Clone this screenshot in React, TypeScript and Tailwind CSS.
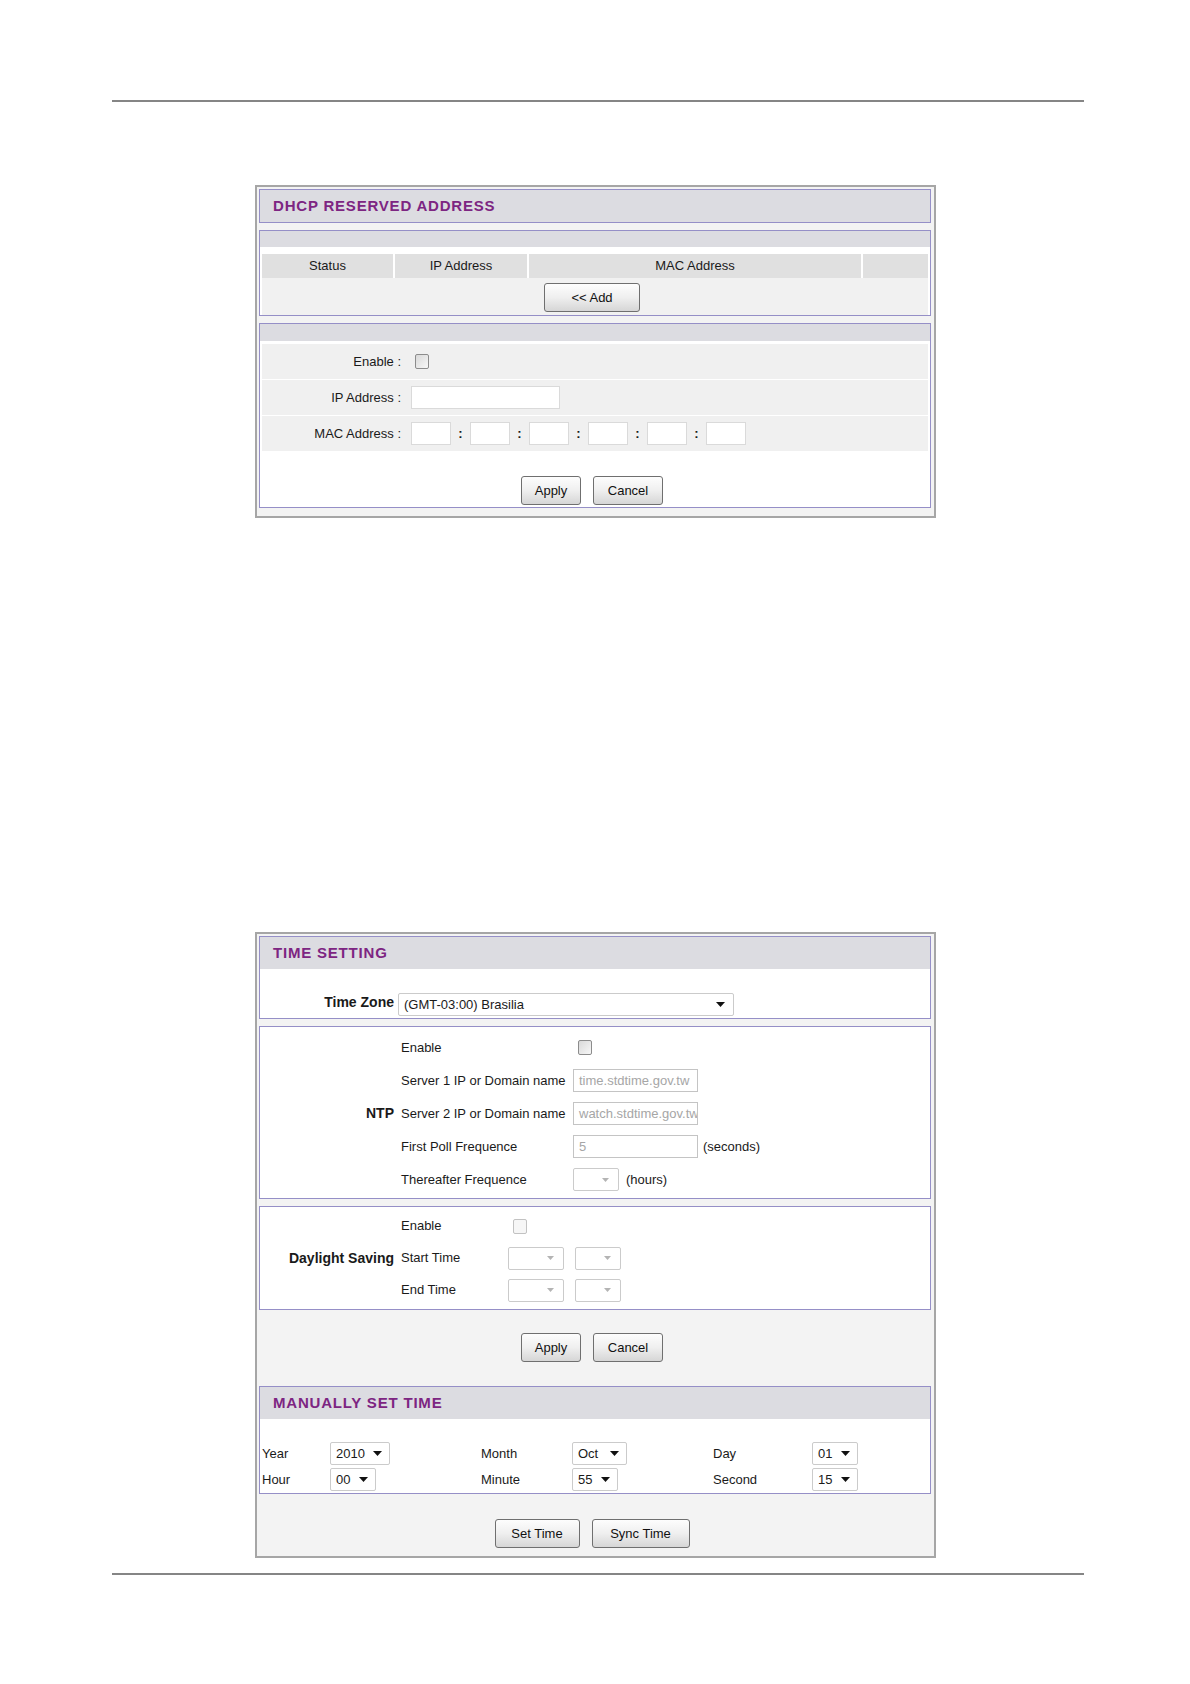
import React from 'react';

const Btn = ({ label, w }: { label: string; w: string }) => (
  <div
    className={`${w} h-[29px] flex items-center justify-center border border-[#6f6f6f] rounded-[3px] bg-linear-to-b from-[#fdfdfd] via-[#efefef] to-[#d6d6d6] text-[13px] text-[#111]`}
  >
    {label}
  </div>
);

const Arrow = ({ dim }: { dim?: boolean }) =>
  dim ? (
    <svg width="7" height="4" viewBox="0 0 7 4">
      <polygon points="0,0 7,0 3.5,4" fill="#b4b4b4" />
    </svg>
  ) : (
    <svg width="9" height="5" viewBox="0 0 9 5">
      <polygon points="0,0 9,0 4.5,5" fill="#111" />
    </svg>
  );

const Select = ({ value, w, dim, arrowPad = 'pr-[7px]' }: { value?: string; w: string; dim?: boolean; arrowPad?: string }) => (
  <div
    className={`${w} h-[23px] flex items-center justify-between pl-[5px] ${arrowPad} bg-white border border-[#cbcbcb] rounded-[2px] text-[13px]`}
  >
    <span>{value ?? ''}</span>
    <Arrow dim={dim} />
  </div>
);

const Check = ({ dim }: { dim?: boolean }) => (
  <div
    className={`w-[14px] h-[15px] border rounded-[2px] ${
      dim ? 'border-[#c2c2c2] bg-[#f6f6f6]' : 'border-[#8c8c8c] bg-linear-to-br from-[#d9d9d9] to-[#f7f7f7]'
    }`}
  />
);

const Field = ({ w, value }: { w: string; value?: string }) => (
  <div
    className={`${w} h-[23px] flex items-center pl-[5px] overflow-hidden whitespace-nowrap bg-white border ${
      value ? 'border-[#c4c4c4] text-[#a6a6a6]' : 'border-[#dadada]'
    } text-[13px]`}
  >
    {value}
  </div>
);

const Header = ({ title }: { title: string }) => (
  <div className="h-[32px] bg-[#dcdce1] flex items-center pl-[13px] text-[15px] font-bold tracking-[0.8px] text-[#7d2582]">
    {title}
  </div>
);

const Panel = ({ children, pb }: { children: React.ReactNode; pb: string }) => (
  <div className={`ml-[255px] w-[681px] border-2 border-[#a6a6a6] bg-[#f3f3f3] pt-[2px] pl-[2px] pr-[3px] ${pb} flex flex-col gap-[7px]`}>
    {children}
  </div>
);

const box = 'border border-[#958fc7] bg-white';

export default function App() {
  return (
    <div className="w-[1190px] h-[1684px] bg-white text-[#1a1a1a] font-['Liberation_Sans',Arial,sans-serif] text-[13px]">
      {/* top rule */}
      <div className="pt-[100px] pl-[112px]">
        <div className="w-[972px] h-[2px] bg-[#858585]" />
      </div>

      {/* DHCP reserved address */}
      <div className="mt-[83px]">
        <Panel pb="pb-[8px]">
          <div className={`${box} !bg-[#dcdce1]`}>
            <Header title="DHCP RESERVED ADDRESS" />
          </div>

          <div className={box}>
            <div className="h-[16px] bg-[#dcdce1]" />
            <div className="h-[7px]" />
            <div className="px-[2px] grid grid-cols-[131px_132px_332px_1fr] gap-x-[2px] bg-white">
              {['Status', 'IP Address', 'MAC Address', ''].map((h, i) => (
                <div key={i} className="h-[24px] bg-[#e0e0e0] flex items-center justify-center">
                  {h}
                </div>
              ))}
            </div>
            <div className="mx-[2px] h-[37px] bg-[#f1f1f1] flex justify-center pt-[5px] pr-[6px]">
              <Btn label="<< Add" w="w-[96px]" />
            </div>
          </div>

          <div className={box}>
            <div className="h-[17px] bg-[#dcdce1]" />
            <div className="px-[2px] pt-[3px] flex flex-col gap-[1px]">
              <div className="h-[35px] bg-[#f0f0f0] flex items-center">
                <div className="w-[145px] text-right pr-[6px]">Enable :</div>
                <div className="pl-[8px]">
                  <Check />
                </div>
              </div>
              <div className="h-[35px] bg-[#f0f0f0] flex items-center">
                <div className="w-[145px] text-right pr-[6px]">IP Address :</div>
                <div className="pl-[4px]">
                  <Field w="w-[149px]" />
                </div>
              </div>
              <div className="h-[35px] bg-[#f0f0f0] flex items-center">
                <div className="w-[145px] text-right pr-[6px]">MAC Address :</div>
                <div className="pl-[4px] flex items-center">
                  {[0, 1, 2, 3, 4, 5].map((i) => (
                    <React.Fragment key={i}>
                      {i > 0 && <span className="w-[19px] text-center font-bold">:</span>}
                      <Field w="w-[40px]" />
                    </React.Fragment>
                  ))}
                </div>
              </div>
            </div>
            <div className="pt-[25px] pb-[2px] pr-[6px] flex justify-center gap-[12px]">
              <Btn label="Apply" w="w-[60px]" />
              <Btn label="Cancel" w="w-[70px]" />
            </div>
          </div>
        </Panel>
      </div>

      {/* Time setting */}
      <div className="mt-[414px]">
        <Panel pb="pb-[8px]">
          <div className={box}>
            <Header title="TIME SETTING" />
            <div className="h-[49px] flex items-end pb-[2px]">
              <div className="w-[134px] text-right text-[14px] font-bold pb-[3px]">Time Zone</div>
              <div className="pl-[4px]">
                <Select value="(GMT-03:00) Brasilia" w="w-[336px]" arrowPad="pr-[8px]" />
              </div>
            </div>
          </div>

          <div className={`${box} flex pt-[4px] pb-[2px]`}>
            <div className="w-[134px] flex items-center justify-end text-[14px] font-bold">NTP</div>
            <div className="pl-[7px] flex flex-col">
              <div className="h-[33px] flex items-center">
                <div className="w-[172px]">Enable</div>
                <div className="pl-[5px]">
                  <Check />
                </div>
              </div>
              <div className="h-[33px] flex items-center">
                <div className="w-[172px]">Server 1 IP or Domain name</div>
                <Field w="w-[125px]" value="time.stdtime.gov.tw" />
              </div>
              <div className="h-[33px] flex items-center">
                <div className="w-[172px]">Server 2 IP or Domain name</div>
                <Field w="w-[125px]" value="watch.stdtime.gov.tw" />
              </div>
              <div className="h-[33px] flex items-center">
                <div className="w-[172px]">First Poll Frequence</div>
                <Field w="w-[125px]" value="5" />
                <span className="pl-[5px]">(seconds)</span>
              </div>
              <div className="h-[33px] flex items-center">
                <div className="w-[172px]">Thereafter Frequence</div>
                <Select w="w-[46px]" dim arrowPad="pr-[9px]" />
                <span className="pl-[7px]">(hours)</span>
              </div>
            </div>
          </div>

          <div className={`${box} flex pt-[3px] pb-[3px]`}>
            <div className="w-[134px] flex items-center justify-end text-[14px] font-bold">Daylight Saving</div>
            <div className="pl-[7px] flex flex-col">
              <div className="h-[32px] flex items-center">
                <div className="w-[107px]">Enable</div>
                <div className="pl-[5px]">
                  <Check dim />
                </div>
              </div>
              {['Start Time', 'End Time'].map((l) => (
                <div key={l} className="h-[32px] flex items-center">
                  <div className="w-[107px]">{l}</div>
                  <div className="flex gap-[11px]">
                    <Select w="w-[56px]" dim arrowPad="pr-[9px]" />
                    <Select w="w-[46px]" dim arrowPad="pr-[9px]" />
                  </div>
                </div>
              ))}
            </div>
          </div>

          <div className="pt-[16px] pb-[24px] pr-[6px] flex justify-center gap-[12px]">
            <Btn label="Apply" w="w-[60px]" />
            <Btn label="Cancel" w="w-[70px]" />
          </div>

          <div className={`${box} -mt-[7px] pb-[2px]`}>
            <Header title="MANUALLY SET TIME" />
            <div className="pt-[23px] px-[2px] grid grid-cols-[68px_151px_91px_141px_99px_1fr] gap-y-[3px] items-center">
              <div>Year</div>
              <Select value="2010" w="w-[60px]" />
              <div>Month</div>
              <Select value="Oct" w="w-[55px]" />
              <div>Day</div>
              <Select value="01" w="w-[46px]" />
              <div>Hour</div>
              <Select value="00" w="w-[46px]" />
              <div>Minute</div>
              <Select value="55" w="w-[46px]" />
              <div>Second</div>
              <Select value="15" w="w-[46px]" />
            </div>
          </div>

          <div className="pt-[18px] pr-[6px] flex justify-center gap-[12px]">
            <Btn label="Set Time" w="w-[85px]" />
            <Btn label="Sync Time" w="w-[98px]" />
          </div>
        </Panel>
      </div>

      {/* bottom rule */}
      <div className="pt-[15px] pl-[112px]">
        <div className="w-[972px] h-[2px] bg-[#858585]" />
      </div>
    </div>
  );
}
